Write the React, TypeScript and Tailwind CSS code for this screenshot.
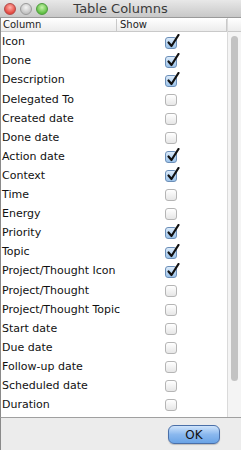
const rows: [string, boolean][] = [
  ['Icon', true],
  ['Done', true],
  ['Description', true],
  ['Delegated To', false],
  ['Created date', false],
  ['Done date', false],
  ['Action date', true],
  ['Context', true],
  ['Time', false],
  ['Energy', false],
  ['Priority', true],
  ['Topic', true],
  ['Project/Thought Icon', true],
  ['Project/Thought', false],
  ['Project/Thought Topic', false],
  ['Start date', false],
  ['Due date', false],
  ['Follow-up date', false],
  ['Scheduled date', false],
  ['Duration', false],
]

function Check({ on }: { on: boolean }) {
  if (!on) {
    return (
      <div className="w-[12px] h-[12px] rounded-[3px] border border-[#b5b5b5] bg-gradient-to-b from-[#ffffff] to-[#e6e6e6]" />
    )
  }
  return (
    <div className="relative w-[12px] h-[12px] rounded-[3px] border border-[#6c8fb8] bg-gradient-to-b from-[#dcebfa] to-[#9cc3ea]">
      <svg className="absolute -top-[4px] left-[1px]" width="13" height="14" viewBox="0 0 13 14">
        <path d="M1.5 8.5 L4.5 12 L11.5 1" fill="none" stroke="#111" strokeWidth="2.2" strokeLinecap="round" strokeLinejoin="round" />
      </svg>
    </div>
  )
}

export default function App() {
  return (
    <div className="w-[241px] h-[450px] flex flex-col bg-[#ececec] overflow-hidden text-[11px] text-[#111]" style={{ fontFamily: '"Lucida Grande", "DejaVu Sans", sans-serif' }}>
      {/* title bar */}
      <div className="h-[18px] shrink-0 relative flex items-center justify-center bg-gradient-to-b from-[#e8e8e8] to-[#c8c8c8] border-b border-[#9a9a9a]">
        <div className="absolute left-[4px] top-[3px] flex gap-[4px]">
          <div className="w-[12px] h-[12px] rounded-full border border-[#b04a4a] bg-[radial-gradient(circle_at_50%_35%,#ffb3ad,#e4483f_70%)]" />
          <div className="w-[12px] h-[12px] rounded-full border border-[#9a9a9a] bg-[radial-gradient(circle_at_50%_35%,#f4f4f4,#c2c2c2_70%)]" />
          <div className="w-[12px] h-[12px] rounded-full border border-[#4e9a3e] bg-[radial-gradient(circle_at_50%_35%,#c8f3ac,#5fbf43_70%)]" />
        </div>
        <span className="text-[13px] text-[#3a3a3a] leading-none">Table Columns</span>
      </div>

      {/* table */}
      <div className="h-[400px] shrink-0 flex bg-white border-l border-[#8a8a8a] border-b border-b-[#a0a0a0]">
        <div className="flex-1 flex flex-col">
          <div className="h-[14px] shrink-0 flex items-center bg-gradient-to-b from-[#ffffff] to-[#ececec] border-b border-[#c9c9c9] text-[10px] text-[#222]">
            <div className="w-[116px] pl-[2px] border-r border-[#c9c9c9] leading-[12px]">Column</div>
            <div className="flex-1 pl-[3px] border-r border-[#c9c9c9] leading-[12px]">Show</div>
          </div>
          <div className="pt-[1px]">
            {rows.map(([name, on]) => (
              <div key={name} className="h-[19.1px] flex items-center">
                <div className="w-[116px] pl-[1px] whitespace-nowrap">{name}</div>
                <div className="flex-1 flex pl-[48px]">
                  <Check on={on} />
                </div>
              </div>
            ))}
          </div>
        </div>
        {/* scrollbar */}
        <div className="w-[14px] shrink-0 flex flex-col bg-[#f4f4f4] border-l border-[#dadada]">
          <div className="h-[14px] shrink-0 bg-gradient-to-b from-[#ffffff] to-[#ececec] border-b border-[#c9c9c9]" />
          <div className="flex-1 px-[3px] pt-[4px] pb-[30px]">
            <div className="h-[345px] rounded-full bg-[#c3c3c3]" />
          </div>
        </div>
      </div>

      {/* footer */}
      <div className="flex-1 flex items-start justify-end pt-[7px] pr-[21px] border-l border-[#8a8a8a]">
        <button className="w-[52px] h-[19px] rounded-[6px] border border-[#4a6fa8] bg-gradient-to-b from-[#cfe4fb] via-[#8ab8ee] to-[#6aa3e6] text-[12px] text-[#111] leading-none shadow-[0_1px_1px_rgba(0,0,0,0.2)]">
          OK
        </button>
      </div>
    </div>
  )
}
